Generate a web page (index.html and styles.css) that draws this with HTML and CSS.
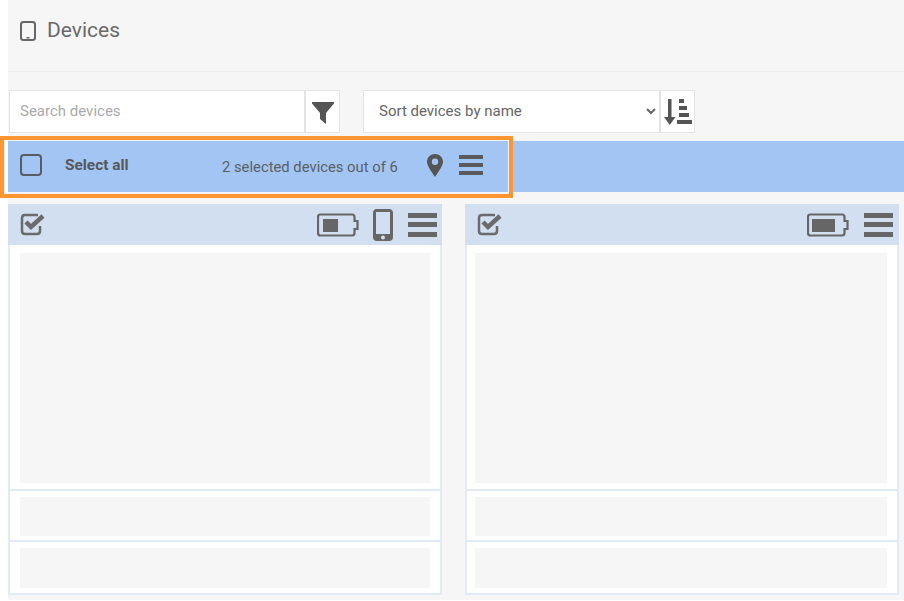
FILE: index.html
```html
<!DOCTYPE html>
<html lang="en">
<head>
<meta charset="utf-8">
<title>Devices</title>
<link rel="stylesheet" href="styles.css">
</head>
<body>
<main class="page">
  <header class="title">
    <svg class="title-icon" viewBox="0 0 16 20"><rect x="1" y="1" width="14" height="18" rx="2.500" fill="none" stroke="#666" stroke-width="2"/><rect x="6.500" y="16" width="3" height="1.500" fill="#666"/></svg>
    <h1>Devices</h1>
  </header>
  <section class="tools">
    <div class="group search">
      <input class="field" type="text" placeholder="Search devices">
      <button class="tool-btn filter" aria-label="Filter">
        <svg viewBox="0 0 22 22" width="22" height="22"><path d="M0 0H22V1.500L14 11V22L8 17V11L0 1.500Z" fill="#555"/></svg>
      </button>
    </div>
    <div class="group sort">
      <select class="field select"><option>Sort devices by name</option></select>
      <button class="tool-btn order" aria-label="Sort order">
        <svg viewBox="0 0 28 28" width="28" height="28"><path d="M4 1H7.500V19H11.500L5.750 27L0 19H4Z" fill="#555"/><rect x="15" y="1" width="5" height="4" fill="#555"/><rect x="15" y="8" width="8" height="4" fill="#555"/><rect x="15" y="15" width="10" height="4" fill="#555"/><rect x="13" y="22" width="15" height="4" fill="#555"/></svg>
      </button>
    </div>
  </section>
  <section class="selection">
    <span class="box"></span>
    <strong class="all">Select all</strong>
    <span class="count">2 selected devices out of 6</span>
    <svg class="pin" viewBox="0 0 16 23" width="16" height="23"><path fill-rule="evenodd" d="M8 0C3.600 0 0 3.400 0 7.700C0 12 5 18.500 8 23C11 18.500 16 12 16 7.700C16 3.400 12.400 0 8 0ZM8 4.500A3.200 3.200 0 1 1 8 10.900A3.200 3.200 0 1 1 8 4.500Z" fill="#555"/></svg>
    <span class="menu menu-top"><i></i><i></i><i></i></span>
    <div class="highlight"></div>
  </section>
  <section class="cards">
    <article class="card">
      <div class="card-head">
        <svg class="check" viewBox="0 0 25 23" width="25" height="23"><path d="M18 2H5Q2 2 2 5V18Q2 21 5 21H17Q20 21 20 18V13" fill="none" stroke="#6b6b6b" stroke-width="2.500"/><path d="M6 9L11 14L23 3" fill="none" stroke="#6b6b6b" stroke-width="4.500"/></svg>
        <span class="spacer"></span>
        <svg class="battery" viewBox="0 0 42 24" width="42" height="24"><path d="M3.500 1.500H35Q37.500 1.500 37.500 4V8H40.500V16H37.500V20Q37.500 22.500 35 22.500H3.500Q1 22.500 1 20V4Q1 1.500 3.500 1.500Z" fill="none" stroke="#666" stroke-width="2.200"/><rect x="6" y="6" width="15" height="13" fill="#666"/></svg>
        <svg class="phone" viewBox="0 0 20 32" width="20" height="32"><path fill-rule="evenodd" d="M4 0H16Q20 0 20 4V28Q20 32 16 32H4Q0 32 0 28V4Q0 0 4 0ZM3 3V25H17V3ZM10 26.500A2 2 0 1 0 10 30.500A2 2 0 1 0 10 26.500Z" fill="#666"/></svg>
        <span class="menu"><i></i><i></i><i></i></span>
      </div>
      <div class="row row-main"><div class="skeleton"></div></div>
      <div class="row row-small"><div class="skeleton"></div></div>
      <div class="row row-last"><div class="skeleton"></div></div>
    </article>
    <article class="card card-alt">
      <div class="card-head">
        <svg class="check" viewBox="0 0 25 23" width="25" height="23"><path d="M18 2H5Q2 2 2 5V18Q2 21 5 21H17Q20 21 20 18V13" fill="none" stroke="#6b6b6b" stroke-width="2.500"/><path d="M6 9L11 14L23 3" fill="none" stroke="#6b6b6b" stroke-width="4.500"/></svg>
        <span class="spacer"></span>
        <svg class="battery" viewBox="0 0 42 24" width="42" height="24"><path d="M3.500 1.500H35Q37.500 1.500 37.500 4V8H40.500V16H37.500V20Q37.500 22.500 35 22.500H3.500Q1 22.500 1 20V4Q1 1.500 3.500 1.500Z" fill="none" stroke="#666" stroke-width="2.200"/><rect x="5" y="6" width="23" height="13" fill="#666"/></svg>
        <span class="menu"><i></i><i></i><i></i></span>
      </div>
      <div class="row row-main"><div class="skeleton"></div></div>
      <div class="row row-small"><div class="skeleton"></div></div>
      <div class="row row-last"><div class="skeleton"></div></div>
    </article>
  </section>
</main>
</body>
</html>
```

FILE: styles.css
```css
* { box-sizing: border-box; }
html, body { margin: 0; height: 100%; background: #fff; overflow: hidden; }
body { font-family: Roboto, "Liberation Sans", sans-serif; color: #666; }

.page {
  margin-left: 8px;
  height: 600px;
  background: #f6f6f6;
  display: flex;
  flex-direction: column;
}

.title {
  height: 72px;
  flex: none;
  border-bottom: 1px solid #eee;
  display: flex;
  align-items: center;
  padding: 0 0 12px 12px;
}
.title-icon { width: 16px; height: 20px; margin-right: 11px; margin-top: 2px; }
h1 { margin: 0; font-size: 21px; font-weight: 400; color: #6a6a6a; line-height: 24px; }

.tools {
  display: flex;
  height: 43px;
  margin-top: 18px;
  padding-left: 1px;
  flex: none;
}
.group { display: flex; height: 43px; }
.search { width: 331px; }
.sort { width: 332px; margin-left: 23px; }
.field {
  flex: 1;
  min-width: 0;
  height: 43px;
  border: 1px solid #e4e4e4;
  border-width: 1px 2px 1px 1px;
  background: #fff;
  padding: 0 10px 2px;
  font: 15px Roboto, "Liberation Sans", sans-serif;
  color: #666;
  outline: none;
}
.field::placeholder { color: #aaa; opacity: 1; }
.select { padding-left: 11px; border-radius: 0; }
.tool-btn {
  flex: none;
  width: 34px;
  height: 43px;
  background: #fff;
  border: 1px solid #e4e4e4;
  border-left: 0;
  padding: 0;
  display: flex;
  align-items: center;
  justify-content: center;
}
.tool-btn.filter svg { margin-top: 2px; }

.selection {
  position: relative;
  flex: none;
  height: 51px;
  margin-top: 8px;
  background: #a2c5f3;
  display: flex;
  align-items: center;
}
.box {
  width: 22px;
  height: 22px;
  margin-left: 12px;
  margin-top: -3px;
  border: 2px solid #585c63;
  border-radius: 4px;
}
.all { margin-left: 23px; width: 157px; font-size: 15.400px; font-weight: 700; color: #585858; margin-top: -3px; }
.count { width: 205px; font-size: 14.800px; color: #5c5f63; }
.pin { margin-top: -3px; }
.menu {
  width: 29px;
  height: 24px;
  display: flex;
  flex-direction: column;
  justify-content: space-between;
}
.menu i { display: block; height: 5px; background: #666; }
.menu-top { width: 24px; height: 20px; margin-left: 16px; margin-top: -3px; }
.menu-top i { height: 4px; background: #5a5a5a; }
.highlight {
  position: absolute;
  left: -8px;
  top: -5px;
  width: 513px;
  height: 62px;
  border: 4px solid #fd9530;
  box-shadow: inset 0 0 0 1px #eef2f8;
}

.cards {
  display: flex;
  gap: 23px;
  margin-top: 12px;
}
.card {
  width: 434px;
  height: 391px;
  background: #fff;
  border: 1px solid #e3eaf7;
  border-width: 0 2px 2px;
  display: flex;
  flex-direction: column;
}
.card-head {
  height: 41px;
  margin: 0 -2px;
  background: #d1dff0;
  display: flex;
  align-items: center;
  padding: 0 5px 0 12px;
  flex: none;
}
.spacer { flex: 1; }
.battery { margin-right: 14px; }
.phone { margin-right: 15px; }
.card-alt .battery { margin-right: 15px; }
.card-alt .card-head { padding-right: 6px; }
.row { padding: 0 10px; border-bottom: 2px solid #e3eaf7; display: flex; flex: none; }
.card-alt .row { padding-left: 8px; }
.row-main { height: 246px; padding-top: 8px; padding-bottom: 6px; }
.row-small { height: 51px; padding-top: 6px; padding-bottom: 4px; }
.row-last { flex: 1; border-bottom: 0; padding-top: 6px; padding-bottom: 5px; }
.skeleton { flex: 1; background: #f6f6f6; }
```
